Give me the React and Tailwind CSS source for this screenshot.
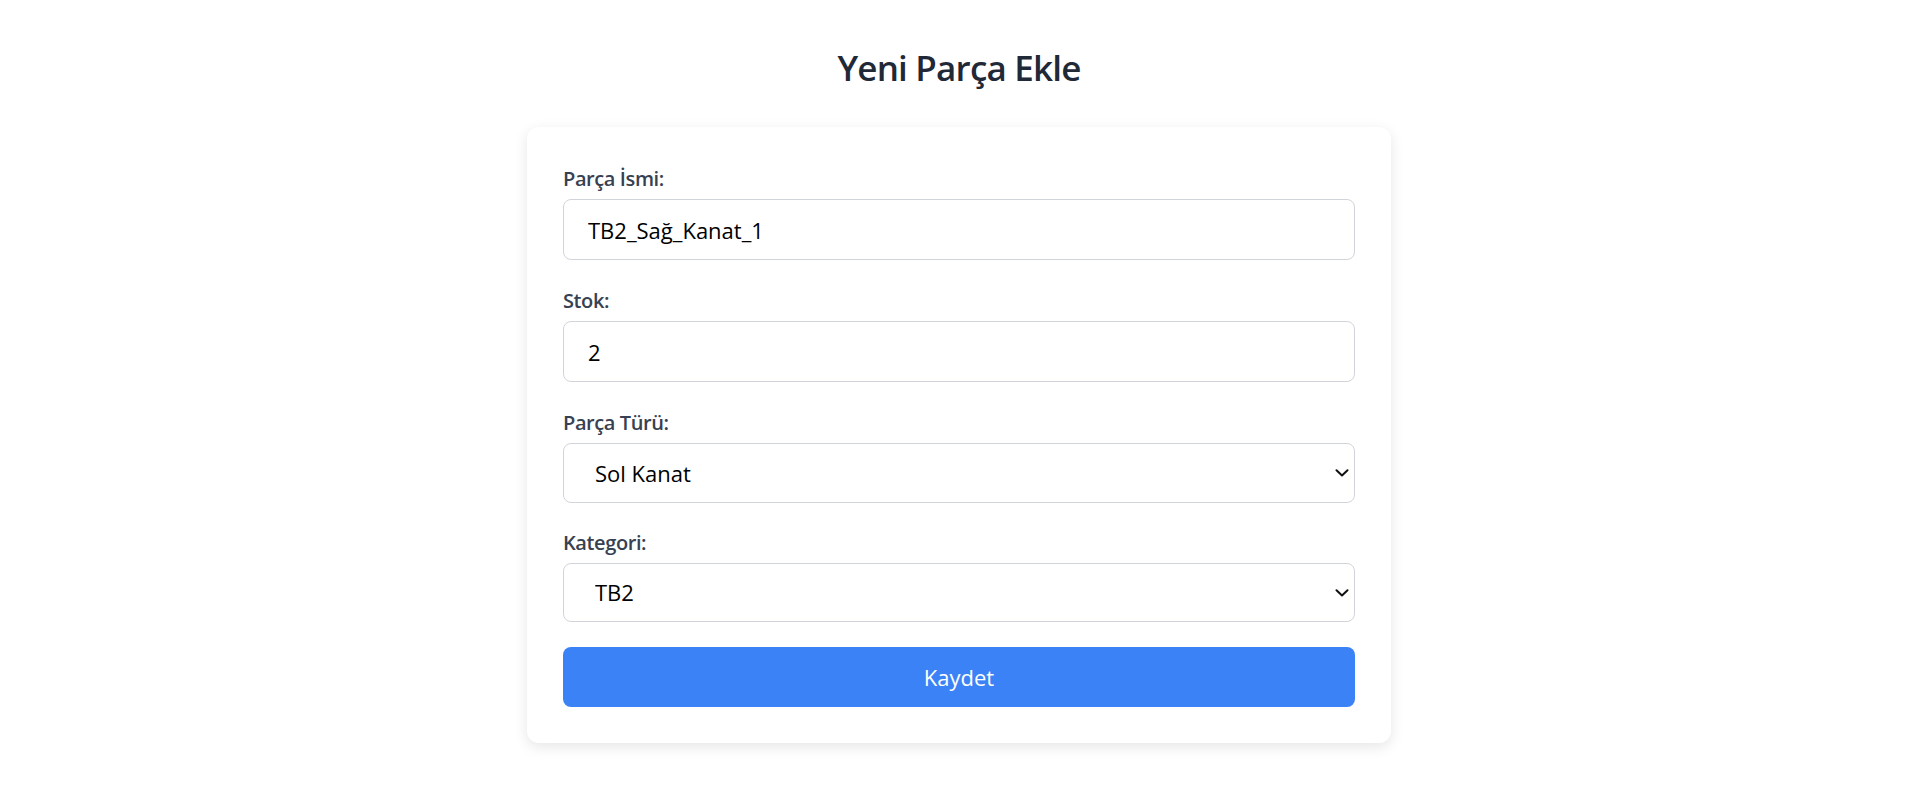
import React from "react";

function Chevron() {
  return (
    <svg
      className="pointer-events-none absolute right-[6px] top-1/2 -translate-y-1/2"
      width="14"
      height="8"
      viewBox="0 0 14 8"
      fill="none"
    >
      <path d="M1.5 1.2L7 6.5L12.5 1.2" stroke="#111" strokeWidth="2" strokeLinecap="round" strokeLinejoin="round" />
    </svg>
  );
}

export default function App() {
  return (
    <div className="min-h-screen bg-white flex flex-col items-center font-['Open_Sans','Noto_Sans',sans-serif]">
      <h2 className="mt-[46px] text-[35px] leading-[44px] font-semibold text-[#1f2937] tracking-[-0.8px]">
        Yeni Parça Ekle
      </h2>
      <form className="mt-[37px] w-[864px] bg-white rounded-xl shadow-[0_4px_14px_rgba(0,0,0,0.1)] px-9 pt-10 pb-9 flex flex-col">
        <label className="block text-[20px] leading-[24px] font-semibold text-[#374151] tracking-[-0.4px] mb-2">Parça İsmi:</label>
        <input
          type="text"
          defaultValue="TB2_Sağ_Kanat_1"
          className="w-full h-[61px] border border-[#d1d5db] rounded-lg px-6 text-[22px] text-black bg-white outline-none mb-[29px]"
        />
        <label className="block text-[20px] leading-[24px] font-semibold text-[#374151] tracking-[-0.4px] mb-2">Stok:</label>
        <input
          type="text"
          defaultValue="2"
          className="w-full h-[61px] border border-[#d1d5db] rounded-lg px-6 text-[22px] text-black bg-white outline-none mb-[29px]"
        />
        <label className="block text-[20px] leading-[24px] font-semibold text-[#374151] tracking-[-0.4px] mb-2">Parça Türü:</label>
        <div className="relative mb-[28px]">
          <select
            defaultValue="Sol Kanat"
            className="w-full h-[60px] appearance-none border border-[#d1d5db] rounded-lg pl-[31px] pr-8 text-[22px] text-black bg-white outline-none"
          >
            <option>Sol Kanat</option>
            <option>Sağ Kanat</option>
          </select>
          <Chevron />
        </div>
        <label className="block text-[20px] leading-[24px] font-semibold text-[#374151] tracking-[-0.4px] mb-2">Kategori:</label>
        <div className="relative mb-[25px]">
          <select
            defaultValue="TB2"
            className="w-full h-[59px] appearance-none border border-[#d1d5db] rounded-lg pl-[31px] pr-8 text-[22px] text-black bg-white outline-none"
          >
            <option>TB2</option>
            <option>TB3</option>
          </select>
          <Chevron />
        </div>
        <button
          type="button"
          className="w-full h-[60px] rounded-lg bg-[#3b82f6] text-white text-[22px]"
        >
          Kaydet
        </button>
      </form>
    </div>
  );
}
